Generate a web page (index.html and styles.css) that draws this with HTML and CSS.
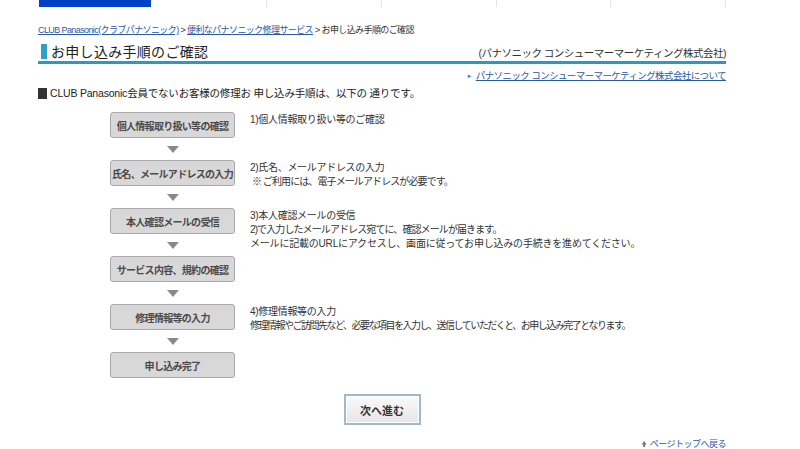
FILE: index.html
```html
<!DOCTYPE html>
<html lang="ja">
<head>
<meta charset="utf-8">
<title>お申し込み手順のご確認</title>
<link rel="stylesheet" href="styles.css">
</head>
<body>
<div class="page">
  <nav class="tabs">
    <span class="tab active"></span>
    <span class="tab"></span>
    <span class="tab"></span>
    <span class="tab"></span>
    <span class="tab"></span>
    <span class="tab"></span>
  </nav>
  <div class="breadcrumb">
    <a href="#">CLUB Panasonic(クラブパナソニック)</a> &gt; <a href="#">便利なパナソニック修理サービス</a> &gt; お申し込み手順のご確認
  </div>
  <header class="title-row">
    <h1 class="title"><span class="marker"></span>お申し込み手順のご確認</h1>
    <span class="company">(パナソニック コンシューマーマーケティング株式会社)</span>
  </header>
  <div class="about"><span class="tri">&#9658;</span><a href="#">パナソニック コンシューマーマーケティング株式会社について</a></div>
  <p class="intro"><span class="sq"></span>CLUB Panasonic会員でないお客様の修理お 申し込み手順は、以下の 通りです。</p>

  <div class="steps">
    <div class="step">
      <div class="left"><div class="box">個人情報取り扱い等の確認</div><div class="arrow"></div></div>
      <div class="desc"><p>1)個人情報取り扱い等のご確認</p></div>
    </div>
    <div class="step">
      <div class="left"><div class="box">氏名、メールアドレスの入力</div><div class="arrow"></div></div>
      <div class="desc"><p>2)氏名、メールアドレスの入力</p><p>&nbsp;※ ご利用には、電子メールアドレスが必要です。</p></div>
    </div>
    <div class="step">
      <div class="left"><div class="box">本人確認メールの受信</div><div class="arrow"></div></div>
      <div class="desc"><p>3)本人確認メールの受信</p><p>2)で入力したメールアドレス宛てに、確認メールが届きます。</p><p class="wide">メールに記載のURLにアクセスし、画面に従ってお申し込みの手続きを進めてください。</p></div>
    </div>
    <div class="step">
      <div class="left"><div class="box">サービス内容、規約の確認</div><div class="arrow"></div></div>
      <div class="desc"></div>
    </div>
    <div class="step">
      <div class="left"><div class="box">修理情報等の入力</div><div class="arrow"></div></div>
      <div class="desc"><p>4)修理情報等の入力</p><p class="narrow">修理情報やご訪問先など、必要な項目を入力し、送信していただくと、お申し込み完了となります。</p></div>
    </div>
    <div class="step">
      <div class="left"><div class="box">申し込み完了</div></div>
      <div class="desc"></div>
    </div>
  </div>

  <div class="actions"><button class="next" type="button">次へ進む</button></div>
  <div class="pagetop"><span class="up"></span><a href="#">ページトップへ戻る</a></div>
</div>
</body>
</html>
```
FILE: styles.css
```css
html, body {
  margin: 0;
  padding: 0;
  background: #fff;
}
body {
  font-family: "Liberation Sans", "Noto Sans CJK JP", sans-serif;
  color: #333;
  font-size: 10px;
}
a { color: #1f4f9f; }
p { margin: 0; }

.page {
  width: 688px;
  margin-left: 38px;
}

.tabs {
  display: flex;
  height: 7px;
}
.tab {
  width: 115px;
  border-right: 1px solid #e2e2e2;
}
.tab.active {
  background: #0040c4;
  margin-left: 1px;
  width: 113px;
  border-right: 2px solid #fff;
}

.breadcrumb {
  margin-top: 17px;
  font-size: 9px;
  letter-spacing: -0.6px;
  color: #333;
  line-height: 12px;
}
.breadcrumb a { color: #2a5aa8; }

.title-row {
  display: flex;
  justify-content: space-between;
  align-items: center;
  margin-top: 5px;
  height: 20px;
  border-bottom: 3px solid #2a9ac4;
}
.title {
  display: flex;
  align-items: center;
  margin: 0;
  font-size: 14px;
  font-weight: normal;
  color: #222;
  letter-spacing: 0.3px;
}
.marker {
  width: 6px;
  height: 15px;
  background: #2ea2c6;
  margin: 0 4px 0 3px;
}
.company {
  font-size: 10.5px;
  color: #333;
  letter-spacing: -0.5px;
  padding-top: 2px;
}

.about {
  margin-top: 6px;
  text-align: right;
  font-size: 9.5px;
  letter-spacing: -0.6px;
  line-height: 12px;
}
.about .tri {
  color: #3a8ad0;
  font-size: 6px;
  margin-right: 4px;
  vertical-align: 1px;
}
.about a { color: #2a5aa8; }

.intro {
  margin-top: 4px;
  font-size: 10.5px;
  color: #222;
  line-height: 14px;
  display: flex;
  align-items: center;
  letter-spacing: -0.2px;
}
.sq {
  width: 9px;
  height: 11px;
  background: #333;
  margin-right: 3px;
}

.steps {
  margin-top: 12px;
  padding-left: 72px;
}
.step {
  display: flex;
  gap: 15px;
}
.left {
  width: 125px;
  flex: none;
}
.box {
  box-sizing: border-box;
  height: 26px;
  border: 1px solid #a9a9a9;
  border-radius: 3px;
  background: #d8d8d8;
  display: flex;
  align-items: center;
  justify-content: center;
  font-size: 10px;
  font-weight: bold;
  color: #4a4a4a;
  letter-spacing: -0.7px;
}
.arrow {
  height: 22px;
  display: flex;
  align-items: center;
  justify-content: center;
}
.arrow::before {
  content: "";
  border-left: 6px solid transparent;
  border-right: 6px solid transparent;
  border-top: 7px solid #8a8a8a;
}
.desc {
  padding-top: 1px;
  font-size: 10px;
  line-height: 14px;
  color: #333;
  letter-spacing: -0.9px;
}
.desc p:first-child {
  letter-spacing: -0.3px;
}
.desc p.wide {
  letter-spacing: -0.2px;
}
.desc p.narrow {
  letter-spacing: -1.5px;
}

.actions {
  display: flex;
  justify-content: center;
  margin-top: 16px;
}
.next {
  width: 77px;
  height: 31px;
  border: 2px solid #a2b9cb;
  box-shadow: inset 0 0 0 1px #fff;
  background: linear-gradient(#fafafa, #e6e6e6);
  font-family: "Liberation Sans", "Noto Sans CJK JP", sans-serif;
  font-size: 11px;
  font-weight: bold;
  color: #333;
  padding: 0;
}

.pagetop {
  margin-top: 14px;
  display: flex;
  justify-content: flex-end;
  align-items: center;
  font-size: 9px;
  letter-spacing: -0.5px;
  line-height: 10px;
}
.pagetop .up {
  width: 5px;
  height: 6px;
  background: #777;
  margin-right: 3px;
  clip-path: polygon(50% 0, 100% 60%, 70% 60%, 70% 100%, 30% 100%, 30% 60%, 0 60%);
}
.pagetop a {
  color: #2a5aa8;
  text-decoration: none;
}
```
